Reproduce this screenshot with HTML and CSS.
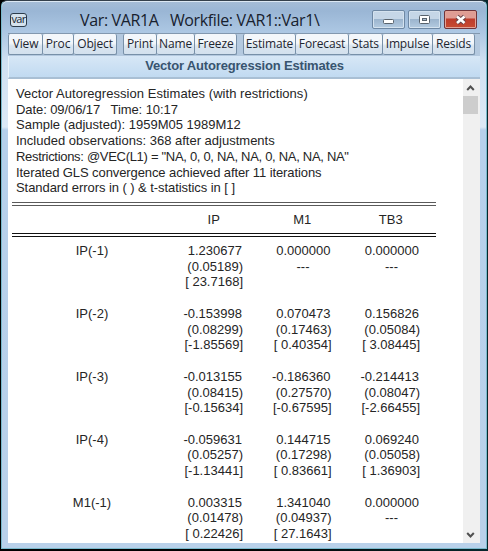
FILE: index.html
```html
<!DOCTYPE html>
<html lang="en">
<head>
<meta charset="utf-8">
<title>Var: VAR1A</title>
<link rel="stylesheet" href="styles.css">
</head>
<body>
<div class="window">
  <header class="titlebar">
    <span class="app-icon">var</span>
    <h1 class="title">Var: VAR1A &nbsp; Workfile: VAR1::Var1\</h1>
    <div class="controls">
      <span class="control"><svg width="32" height="18" viewBox="0 0 32 18"><rect x="10.5" y="8.500" width="10" height="4" rx="1" fill="#fff" stroke="#59636d"/></svg></span>
      <span class="control"><svg width="32" height="18" viewBox="0 0 32 18"><rect x="10.5" y="4.500" width="10" height="8" rx="1" fill="#fff" stroke="#59636d"/><rect x="13.500" y="7.500" width="4" height="2" fill="#aabdd0" stroke="#59636d"/></svg></span>
      <span class="control close"><svg width="32" height="18" viewBox="0 0 32 18"><path d="M12 5.500 19.500 12M19.500 5.500 12 12" stroke="#66434a" stroke-width="4.500"/><path d="M12 5.500 19.500 12M19.500 5.500 12 12" stroke="#fff" stroke-width="2.600"/></svg></span>
    </div>
  </header>
  <nav class="toolbar">
    <div class="group"><button class="view">View</button><button class="proc">Proc</button><button class="object">Object</button></div>
    <div class="group"><button class="print">Print</button><button class="name">Name</button><button class="freeze">Freeze</button></div>
    <div class="group"><button class="estimate">Estimate</button><button class="forecast">Forecast</button><button class="stats">Stats</button><button class="impulse">Impulse</button><button class="resids">Resids</button></div>
  </nav>
  <h2 class="heading">Vector Autoregression Estimates</h2>
  <main class="content">
    <div class="report">
      <div class="summary">
        <p class="s1">Vector Autoregression Estimates (with restrictions)</p>
        <p class="s2">Date: 09/06/17 &nbsp; Time: 10:17</p>
        <p>Sample (adjusted): 1959M05 1989M12</p>
        <p>Included observations: 368 after adjustments</p>
        <p class="s5">Restrictions: @VEC(L1) = "NA, 0, 0, NA, NA, 0, NA, NA, NA"</p>
        <p class="s6">Iterated GLS convergence achieved after 11 iterations</p>
        <p class="s7">Standard errors in ( ) &amp; t-statistics in [ ]</p>
      </div>
      <div class="row head"><span></span><span>IP</span><span>M1</span><span>TB3</span></div>
      <div class="row"><span class="label">IP(-1)</span>
        <div class="cell"><b>1.230677</b><i>(0.05189)</i><i>[ 23.7168]</i></div>
        <div class="cell"><b>0.000000</b><em>---</em></div>
        <div class="cell"><b>0.000000</b><em>---</em></div></div>
      <div class="row"><span class="label">IP(-2)</span>
        <div class="cell"><b>-0.153998</b><i>(0.08299)</i><i>[-1.85569]</i></div>
        <div class="cell"><b>0.070473</b><i>(0.17463)</i><i>[ 0.40354]</i></div>
        <div class="cell"><b>0.156826</b><i>(0.05084)</i><i>[ 3.08445]</i></div></div>
      <div class="row"><span class="label">IP(-3)</span>
        <div class="cell"><b>-0.013155</b><i>(0.08415)</i><i>[-0.15634]</i></div>
        <div class="cell"><b>-0.186360</b><i>(0.27570)</i><i>[-0.67595]</i></div>
        <div class="cell"><b>-0.214413</b><i>(0.08047)</i><i>[-2.66455]</i></div></div>
      <div class="row"><span class="label">IP(-4)</span>
        <div class="cell"><b>-0.059631</b><i>(0.05257)</i><i>[-1.13441]</i></div>
        <div class="cell"><b>0.144715</b><i>(0.17298)</i><i>[ 0.83661]</i></div>
        <div class="cell"><b>0.069240</b><i>(0.05058)</i><i>[ 1.36903]</i></div></div>
      <div class="row"><span class="label">M1(-1)</span>
        <div class="cell"><b>0.003315</b><i>(0.01478)</i><i>[ 0.22426]</i></div>
        <div class="cell"><b>1.341040</b><i>(0.04937)</i><i>[ 27.1643]</i></div>
        <div class="cell"><b>0.000000</b><em>---</em></div></div>
    </div>
    <div class="scrollbar">
      <svg width="15" height="17" viewBox="0 0 15 17"><path d="M4.200 11 7.500 7.500 10.800 11" fill="none" stroke="#505050" stroke-width="2"/></svg>
      <div class="thumb"></div>
      <svg class="down" width="15" height="17" viewBox="0 0 15 17"><path d="M4.200 7 7.500 10.500 10.800 7" fill="none" stroke="#505050" stroke-width="2"/></svg>
    </div>
  </main>
</div>
</body>
</html>
```
FILE: styles.css
```css
* { box-sizing: border-box; }
html { background: #000; }
body {
  margin: 0;
  width: 488px;
  height: 551px;
  overflow: hidden;
  background: linear-gradient(90deg, #000 50%, #06272c);
  font-family: "Liberation Sans", Arial, sans-serif;
}
.window {
  width: 486px;
  height: 549px;
  margin-left: 1px;
  padding: 0 6px 6px;
  border: 1px solid #79b9cc;
  border-top: 1px solid #34404b;
  border-radius: 6px 6px 0 0;
  background: linear-gradient(#a6bdd6 0, #9ab6d5 10px, #adc8e4 32px, #cfe0f2 60px, #dce9f6 126px, #b6d0eb 129px, #b9d1ea);
  box-shadow: inset 0 1px #dce8f3;
}
.titlebar { height: 32px; display: flex; align-items: flex-start; }
.app-icon {
  width: 17px;
  height: 14px;
  margin: 12px 0 0 2px;
  border: 1px solid #2c3c4b;
  border-radius: 3px;
  background: #d5e3ee;
  color: #17232e;
  font: 11px/10px "Open Sans", sans-serif;
  letter-spacing: -0.7px;
  text-align: center;
}
.title {
  width: 241px;
  margin: 8px 0 0 53px;
  color: #17212e;
  font: 16px/22px "Open Sans", "Noto Sans", sans-serif;
  letter-spacing: -0.36px;
  white-space: nowrap;
}
.controls { display: flex; gap: 3px; margin: 9px 0 0 51px; }
.control {
  display: block;
  width: 33px;
  height: 19px;
  border: 1px solid #6e88a4;
  border-radius: 2px;
  background: linear-gradient(#c5d6e7 45%, #9cb5ce 50%, #b4cbe1);
  box-shadow: inset 0 0 0 1px #d4e2ef;
}
.control svg { display: block; }
.close {
  border-color: #70343b;
  background: linear-gradient(#df9c94 40%, #bd3c2c 48%, #c84b32);
  box-shadow: inset 0 0 0 1px #e2a397;
}
.toolbar {
  height: 23px;
  display: flex;
  gap: 6px;
  padding-bottom: 1px;
  background: #b4c9df;
  border-top: 1px solid #8298af;
}
.group { display: flex; }
button {
  height: 21px;
  padding: 0;
  border: 1px solid #7890a8;
  border-left-width: 0;
  border-top: 0;
  border-radius: 2px;
  background: linear-gradient(#f3f7fb 45%, #dae5ef 60%, #d3e1ee);
  color: #1d2530;
  font: 12px/20px "Open Sans", "Noto Sans", sans-serif;
  letter-spacing: -0.15px;
  white-space: nowrap;
}
button:first-child { border-left-width: 1px; }
.view { width: 35px; }
.proc { width: 31px; }
.object { width: 43px; }
.print { width: 34px; }
.name { width: 38px; }
.freeze { width: 42px; }
.estimate { width: 53px; }
.forecast { width: 53px; }
.stats { width: 34px; }
.impulse { width: 50px; }
.resids { width: 42px; }
.heading {
  height: 23px;
  margin: 0;
  border-bottom: 2px solid #a9bfd4;
  border-left: 1px solid #e8f2fa;
  background: linear-gradient(#d7e7f6, #c1daf1);
  color: #38546f;
  font: bold 13px/20px "Liberation Sans", Arial, sans-serif;
  letter-spacing: -0.17px;
  text-align: center;
}
.content { display: flex; height: 464px; background: #fff; color: #252525; }
.report {
  flex: 1;
  padding: 7px 0 0 4px;
  font-size: 13px;
  line-height: 15.72px;
  overflow: hidden;
}
.summary { height: 116px; padding-left: 4px; white-space: nowrap; }
.summary p { margin: 0; height: 15.72px; }
.s1 { letter-spacing: 0.04px; }
.s2 { letter-spacing: -0.08px; }
.s5 { letter-spacing: -0.3px; }
.s6 { letter-spacing: -0.095px; }
.s7 { letter-spacing: -0.065px; }
.row {
  display: grid;
  grid-template-columns: 158.5px 88.5px 88.5px 88.5px;
  width: 424px;
  height: 62.9px;
}
.head {
  height: 35px;
  margin-bottom: 6px;
  padding-top: 6px;
  border-top: 4px double #5a5a5a;
  border-bottom: 4px double #111;
  text-align: center;
}
.head span { padding-right: 2px; }
.label { padding-left: 1.5px; text-align: center; }
.cell { display: flex; flex-direction: column; align-items: flex-end; padding-right: 16px; white-space: nowrap; }
.cell b, .cell i, .cell em { font-weight: normal; font-style: normal; height: 15.72px; }
.cell b { margin-right: 1px; }
.cell em { margin-right: 22px; }
.scrollbar { display: flex; flex-direction: column; width: 17px; padding-right: 2px; background: #f0f0f0; }
.scrollbar svg { display: block; }
.thumb { height: 18px; background: #cdcdcd; }
.down { margin-top: auto; }
```
